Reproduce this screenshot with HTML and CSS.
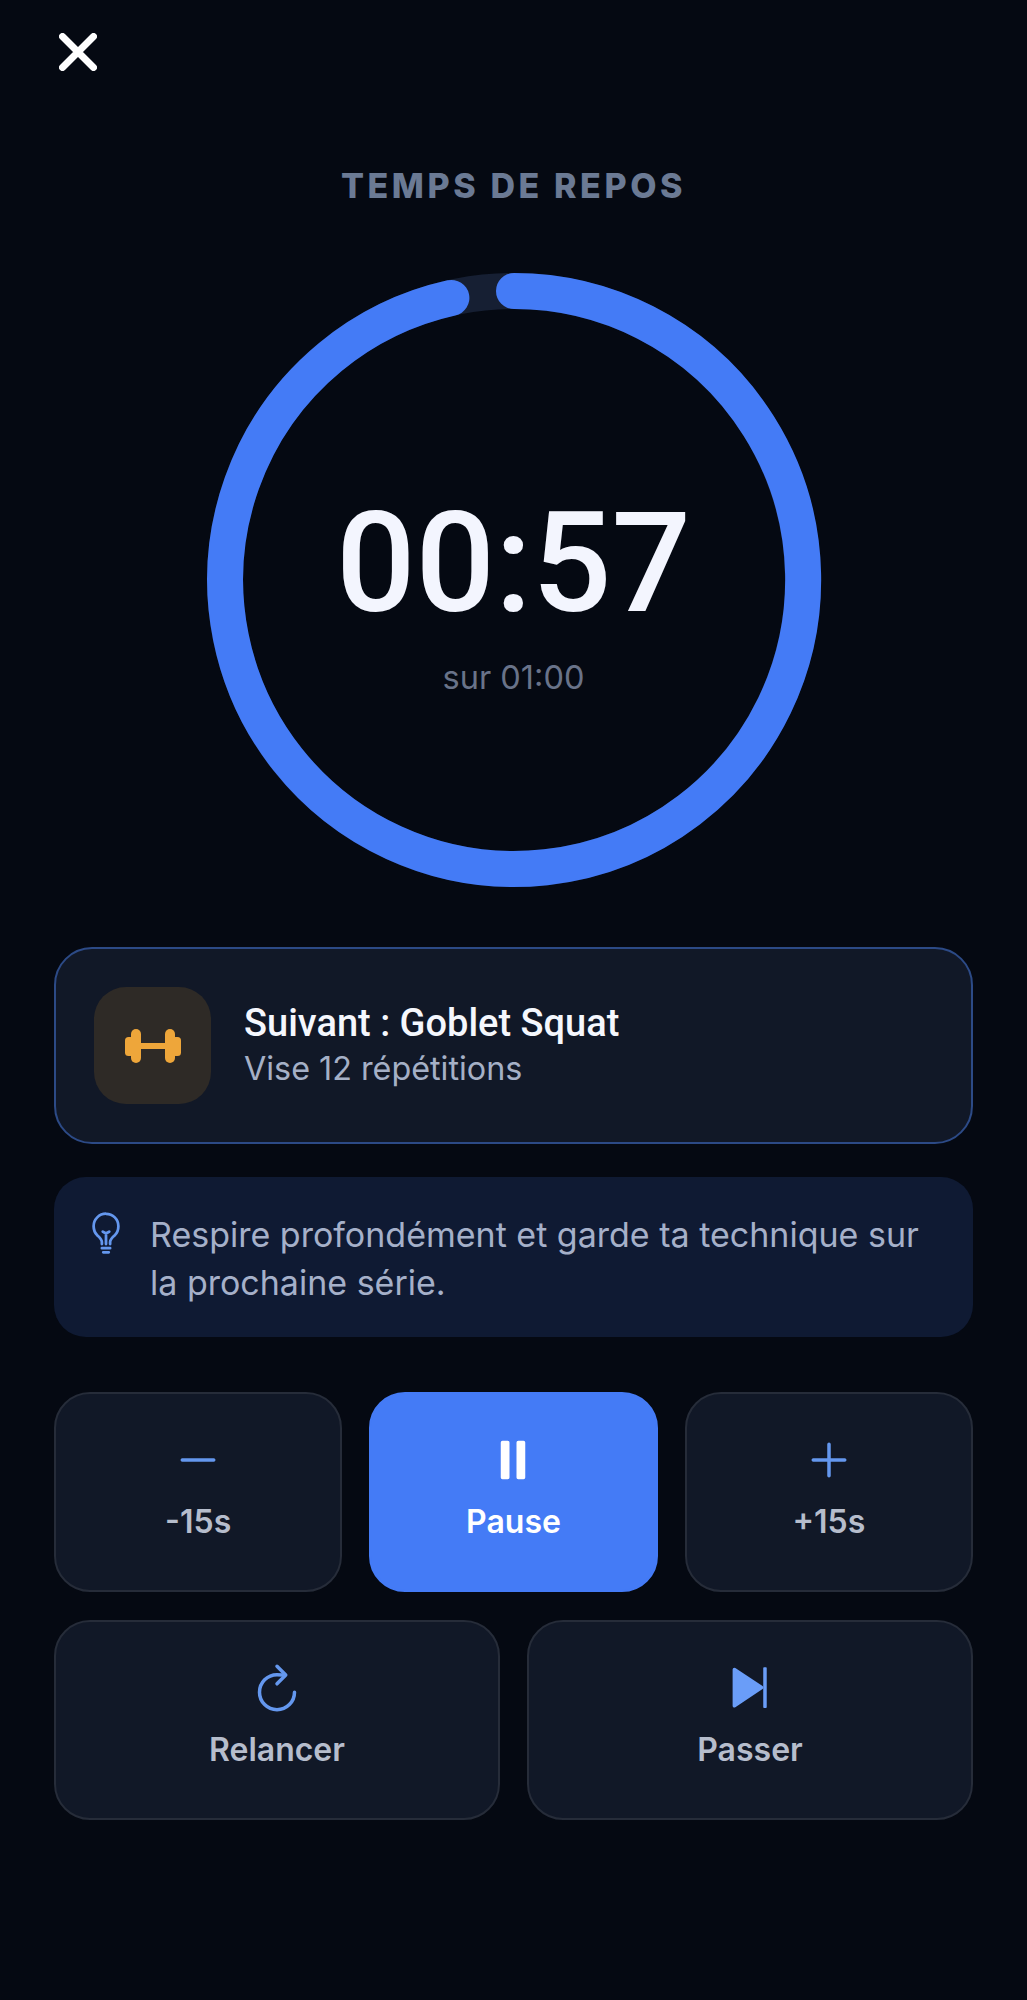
FILE: index.html
```html
<!DOCTYPE html>
<html lang="fr">
<head>
<meta charset="utf-8">
<title>Temps de repos</title>
<link rel="stylesheet" href="styles.css">
</head>
<body>
<main class="page">
  <button class="close" aria-label="Fermer">
    <svg viewBox="0 0 38 38" width="38" height="38"><path d="M3.5 3.5L34.5 34.5M34.5 3.5L3.5 34.5" class="close-x"/></svg>
  </button>
  <h1 class="title">TEMPS DE REPOS</h1>
  <section class="ring">
    <svg class="ring-svg" viewBox="0 0 616 616" width="616" height="616">
      <circle cx="308" cy="308" r="289" class="ring-track"/>
      <path class="ring-fill" d="M308 19A289 289 0 1 1 245.4 25.9"/>
    </svg>
    <div class="ring-center">
      <div class="time">00:57</div>
      <div class="total">sur 01:00</div>
    </div>
  </section>
  <section class="next">
    <div class="next-icon">
      <svg viewBox="0 0 56 34" width="56" height="34" class="dumbbell">
        <rect x="0" y="8" width="9" height="19" rx="3.5"/>
        <rect x="6" y="0" width="10" height="34" rx="5"/>
        <rect x="15" y="14" width="26" height="6"/>
        <rect x="40" y="0" width="10" height="34" rx="5"/>
        <rect x="47" y="8" width="9" height="19" rx="3.5"/>
      </svg>
    </div>
    <div class="next-text">
      <div class="next-name">Suivant : Goblet Squat</div>
      <div class="next-sub">Vise 12 répétitions</div>
    </div>
  </section>
  <section class="tip">
    <svg class="tip-icon" viewBox="0 0 512 512" width="44" height="44">
      <path d="M304 384v-24c0-29 31.54-56.43 52-76 28.84-27.57 44-64.61 44-108 0-80-63.73-144-144-144a143.6 143.6 0 00-144 144c0 41.84 15.81 81.39 44 108 20.35 19.21 52 46.7 52 76v24M224 480h64M208 432h96M256 384V256M294 240s-21.51 16-38 16-38-16-38-16"/>
    </svg>
    <p class="tip-text">Respire profondément et garde ta technique sur la prochaine série.</p>
  </section>
  <section class="controls">
    <button class="btn">
      <svg class="ico" viewBox="0 0 512 512" width="56" height="56"><path d="M400 256H112"/></svg>
      <span class="btn-label">-15s</span>
    </button>
    <button class="btn btn-primary">
      <svg class="ico-fill" viewBox="0 0 512 512" width="56" height="56"><path d="M208 432h-48a16 16 0 01-16-16V96a16 16 0 0116-16h48a16 16 0 0116 16v320a16 16 0 01-16 16zM352 432h-48a16 16 0 01-16-16V96a16 16 0 0116-16h48a16 16 0 0116 16v320a16 16 0 01-16 16z"/></svg>
      <span class="btn-label">Pause</span>
    </button>
    <button class="btn">
      <svg class="ico" viewBox="0 0 512 512" width="56" height="56"><path d="M256 112v288M400 256H112"/></svg>
      <span class="btn-label">+15s</span>
    </button>
  </section>
  <section class="controls controls-two">
    <button class="btn">
      <svg class="ico" viewBox="0 0 512 512" width="56" height="56"><path d="M320 146s24.36-12-64-12a160 160 0 10160 160"/><path d="M256 58l80 80-80 80"/></svg>
      <span class="btn-label">Relancer</span>
    </button>
    <button class="btn">
      <svg class="ico-skip" viewBox="0 0 512 512" width="56" height="56"><path d="M113 86L362 252L113 418Z"/><rect x="377" y="66" width="32" height="372" rx="8"/></svg>
      <span class="btn-label">Passer</span>
    </button>
  </section>
</main>
</body>
</html>
```
FILE: styles.css
```css
* { box-sizing: border-box; }
html, body { margin: 0; background: #050912; }
body { min-height: 2000px; font-family: "Inter", "Liberation Sans", sans-serif; }
.page { padding: 33px 54px 0; display: flex; flex-direction: column; }
.close { align-self: flex-start; width: 38px; height: 38px; margin-left: 5px; padding: 0; border: 0; background: none; display: block; }
.close svg { display: block; }
.close-x { stroke: #fff; stroke-width: 7; stroke-linecap: round; fill: none; }
.title { margin: 95px 0 0; font: 800 34px/40px "Inter", sans-serif; letter-spacing: 3.6px; color: #6b7a94; text-align: center; }
.ring { display: grid; justify-items: center; align-items: center; margin-top: 66px; }
.ring-svg, .ring-center { grid-area: 1 / 1; }
.ring-svg { display: block; }
.ring-track { fill: none; stroke: #161f33; stroke-width: 36; }
.ring-fill { fill: none; stroke: #447bf6; stroke-width: 36; stroke-linecap: round; }
.ring-center { display: flex; flex-direction: column; align-items: center; padding-top: 25px; }
.time { font: 500 140px/150px "Roboto", sans-serif; color: #f3f5fe; }
.total { font: 400 32.5px/40px "Inter", sans-serif; color: #697389; margin-top: 20px; }
.next { margin-top: 59px; height: 197px; border: 2px solid #2c4a86; border-radius: 38px; background: #111827; padding: 0 38px; display: flex; align-items: center; gap: 33px; }
.next-icon { width: 117px; height: 117px; border-radius: 32px; background: #2e2a26; display: flex; align-items: center; justify-content: center; flex: none; }
.dumbbell { fill: #eea63a; display: block; }
.next-name { font: 500 38px/46px "Roboto", sans-serif; color: #f5f7fd; }
.next-sub { font: 400 32.3px/46px "Inter", sans-serif; color: #a5b0c6; }
.tip { margin-top: 33px; border-radius: 32px; background: #0f1a33; padding: 34px 30px 30px; display: flex; gap: 22px; align-items: flex-start; }
.tip-icon { flex: none; display: block; fill: none; stroke: #6497ee; stroke-width: 32; stroke-linecap: round; stroke-linejoin: round; }
.tip-text { margin: 0; font: 400 34px/48px "Inter", sans-serif; color: #a5b0c9; }
.controls { margin-top: 55px; display: grid; grid-template-columns: repeat(3, 1fr); gap: 27px; }
.controls-two { margin-top: 28px; grid-template-columns: repeat(2, 1fr); }
.btn { height: 200px; border: 2px solid #262c39; border-radius: 36px; background: #111827; padding: 38px 0 0; display: flex; flex-direction: column; align-items: center; font-family: inherit; }
.btn-primary { background: #447bf6; border-color: #447bf6; }
.btn-label { margin-top: 12px; font: 600 32px/44px "Inter", sans-serif; color: #b6bdcc; }
.btn-primary .btn-label { color: #fff; }
.ico { display: block; fill: none; stroke: #6497ee; stroke-width: 32; stroke-linecap: round; stroke-linejoin: round; }
.ico-fill { display: block; fill: #fff; }
.ico-skip { display: block; fill: #6a9df8; stroke: none; }
.ico-skip path { stroke: #6a9df8; stroke-width: 32; stroke-linejoin: round; }
```
